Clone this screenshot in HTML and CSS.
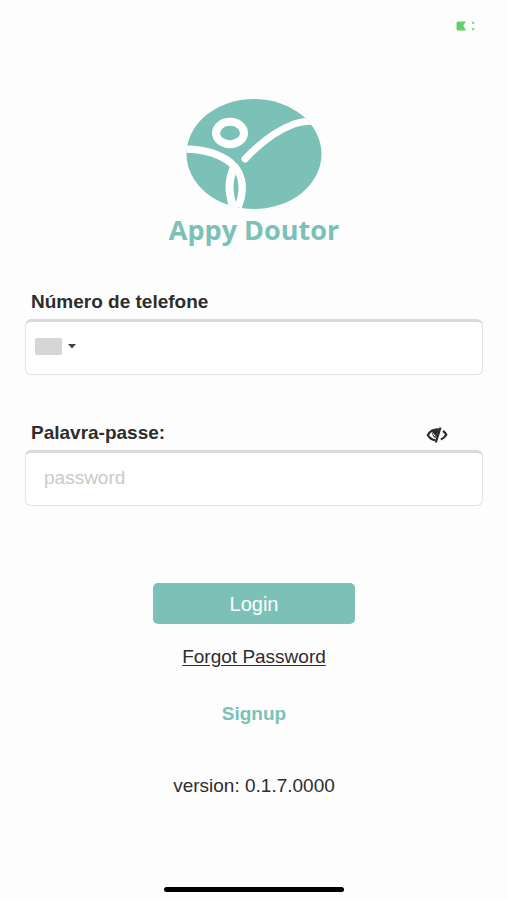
FILE: index.html
```html
<!DOCTYPE html>
<html lang="pt">
<head>
<meta charset="utf-8">
<meta name="viewport" content="width=device-width, initial-scale=1">
<title>Appy Doutor</title>
<link rel="stylesheet" href="styles.css">
</head>
<body>
<div class="screen">
  <header class="status">
    <svg width="20" height="10" viewBox="0 0 20 10" fill="#62cf69" aria-hidden="true">
      <path d="M2 .5H10L7.500 4Q7 5 8 6L10 9.500H2Q.5 9.500.5 8V2Q.5.5 2 .5Z"/>
      <path d="M15.500.8h2l1 2.200h-1.500zM15.500 9.200h2l1-2.200h-1.500z"/>
    </svg>
  </header>
  <main class="content">
    <div class="brand">
      <svg class="logo" width="136" height="112" viewBox="0 0 136 112" aria-hidden="true">
        <defs><clipPath id="disc"><ellipse cx="68" cy="56" rx="67.500" ry="55"/></clipPath></defs>
        <g clip-path="url(#disc)">
          <rect width="136" height="112" fill="#7bc1b8"/>
          <g fill="none" stroke="#fff" stroke-linecap="round">
            <ellipse cx="44" cy="35" rx="14" ry="11.200" stroke-width="8"/>
            <path d="M59 61C74 45 92 32 108 26Q122 21 136 25" stroke-width="7"/>
            <path d="M-3 51C18 51 35 57 45 65C60 78 58 97 50 114" stroke-width="7.500"/>
            <path d="M48 69C42 83 42 94 48 112" stroke-width="8"/>
          </g>
        </g>
      </svg>
      <h1 class="name">Appy Doutor</h1>
    </div>
    <form class="form">
      <div class="label-row"><label for="phone">Número de telefone</label></div>
      <div class="field">
        <button class="country" type="button" aria-label="País">
          <span class="flag"></span>
          <svg width="8" height="5" viewBox="0 0 8 5" aria-hidden="true"><path d="M0 0H8L4 4.500Z" fill="#444"/></svg>
        </button>
        <input id="phone" type="tel">
      </div>
      <div class="label-row second">
        <label for="password">Palavra-passe:</label>
        <button class="reveal" type="button" aria-label="Mostrar palavra-passe">
          <svg width="22" height="18" viewBox="0 0 22 18" fill="none" stroke="#2b2b2b" aria-hidden="true">
            <path d="M13 3.500C7 3 3.500 6 1.800 9C3.500 12 6.500 14 9.500 14.200" stroke-width="2.200"/>
            <path d="M14.500 1.500L9.800 16.500" stroke-width="2.200"/>
            <path d="M6.500 5Q5.500 11 10 12L13 3.500Z" fill="#2b2b2b" stroke="none"/>
            <path d="M7.500 7.500Q7.500 9.800 9.500 10" stroke="#fff"/>
            <path d="M17 5Q19.500 6.500 20.300 8.800Q18.500 12 14.800 13.500" stroke-width="2.200"/>
          </svg>
        </button>
      </div>
      <div class="field">
        <input id="password" type="password" placeholder="password">
      </div>
      <button class="login" type="submit">Login</button>
    </form>
    <a class="forgot" href="#forgot">Forgot Password</a>
    <a class="signup" href="#signup">Signup</a>
    <p class="version">version: 0.1.7.0000</p>
  </main>
  <div class="home-bar"></div>
</div>
</body>
</html>
```
FILE: styles.css
```css
* { box-sizing: border-box; }

body {
  margin: 0;
  background: #fdfdfd;
  color: #2d2d2d;
  font: 19px/24px "Liberation Sans", Arial, sans-serif;
}

button, input { font: inherit; color: inherit; }

.screen {
  min-height: 100vh;
  display: flex;
  flex-direction: column;
  padding: 21px 24px 8px 25px;
}

.status {
  display: flex;
  justify-content: flex-end;
  padding-right: 7px;
  height: 77px;
}

.content {
  flex: 1;
  display: flex;
  flex-direction: column;
  align-items: center;
}

.brand {
  display: flex;
  flex-direction: column;
  align-items: center;
}

.logo { display: block; }

.name {
  margin: 4px 0 0;
  color: #7bc1b8;
  font: bold 27px/32px "Open Sans", sans-serif;
}

.form {
  width: 100%;
  display: flex;
  flex-direction: column;
  margin-top: 44px;
}

.label-row {
  display: flex;
  align-items: center;
  justify-content: space-between;
  padding: 0 35px 0 6px;
  height: 24px;
  margin-bottom: 5px;
  font-weight: bold;
}

.second { margin-top: 46px; }

.reveal {
  display: flex;
  padding: 0;
  border: 0;
  background: none;
  margin-top: 4px;
}

.field {
  display: flex;
  height: 56px;
  padding-bottom: 3px;
  border: 1px solid #e2e2e2;
  border-top: 3px solid #dadada;
  border-radius: 6px;
  background: #fff;
}

.field input {
  flex: 1;
  min-width: 0;
  border: 0;
  outline: 0;
  padding: 0 18px;
  background: none;
}

.field input::placeholder { color: #c9c9c9; }

.country {
  display: flex;
  align-items: center;
  gap: 6px;
  padding: 0 0 0 9px;
  border: 0;
  background: none;
}

.flag {
  width: 27px;
  height: 17px;
  border-radius: 2px;
  background: #d6d6d6;
}

.login {
  align-self: center;
  width: 44%;
  height: 41px;
  margin-top: 77px;
  padding: 0;
  border: 0;
  border-radius: 5px;
  background: #7bc1b8;
  color: #fff;
  font-size: 20px;
}

.forgot {
  margin-top: 21px;
  color: inherit;
  text-underline-offset: 2px;
}

.signup {
  margin-top: 33px;
  color: #7bc1b8;
  font-weight: bold;
  text-decoration: none;
}

.version { margin: 48px 0 0; }

.home-bar {
  align-self: center;
  width: 180px;
  height: 5px;
  border-radius: 3px;
  background: #000;
}
```
